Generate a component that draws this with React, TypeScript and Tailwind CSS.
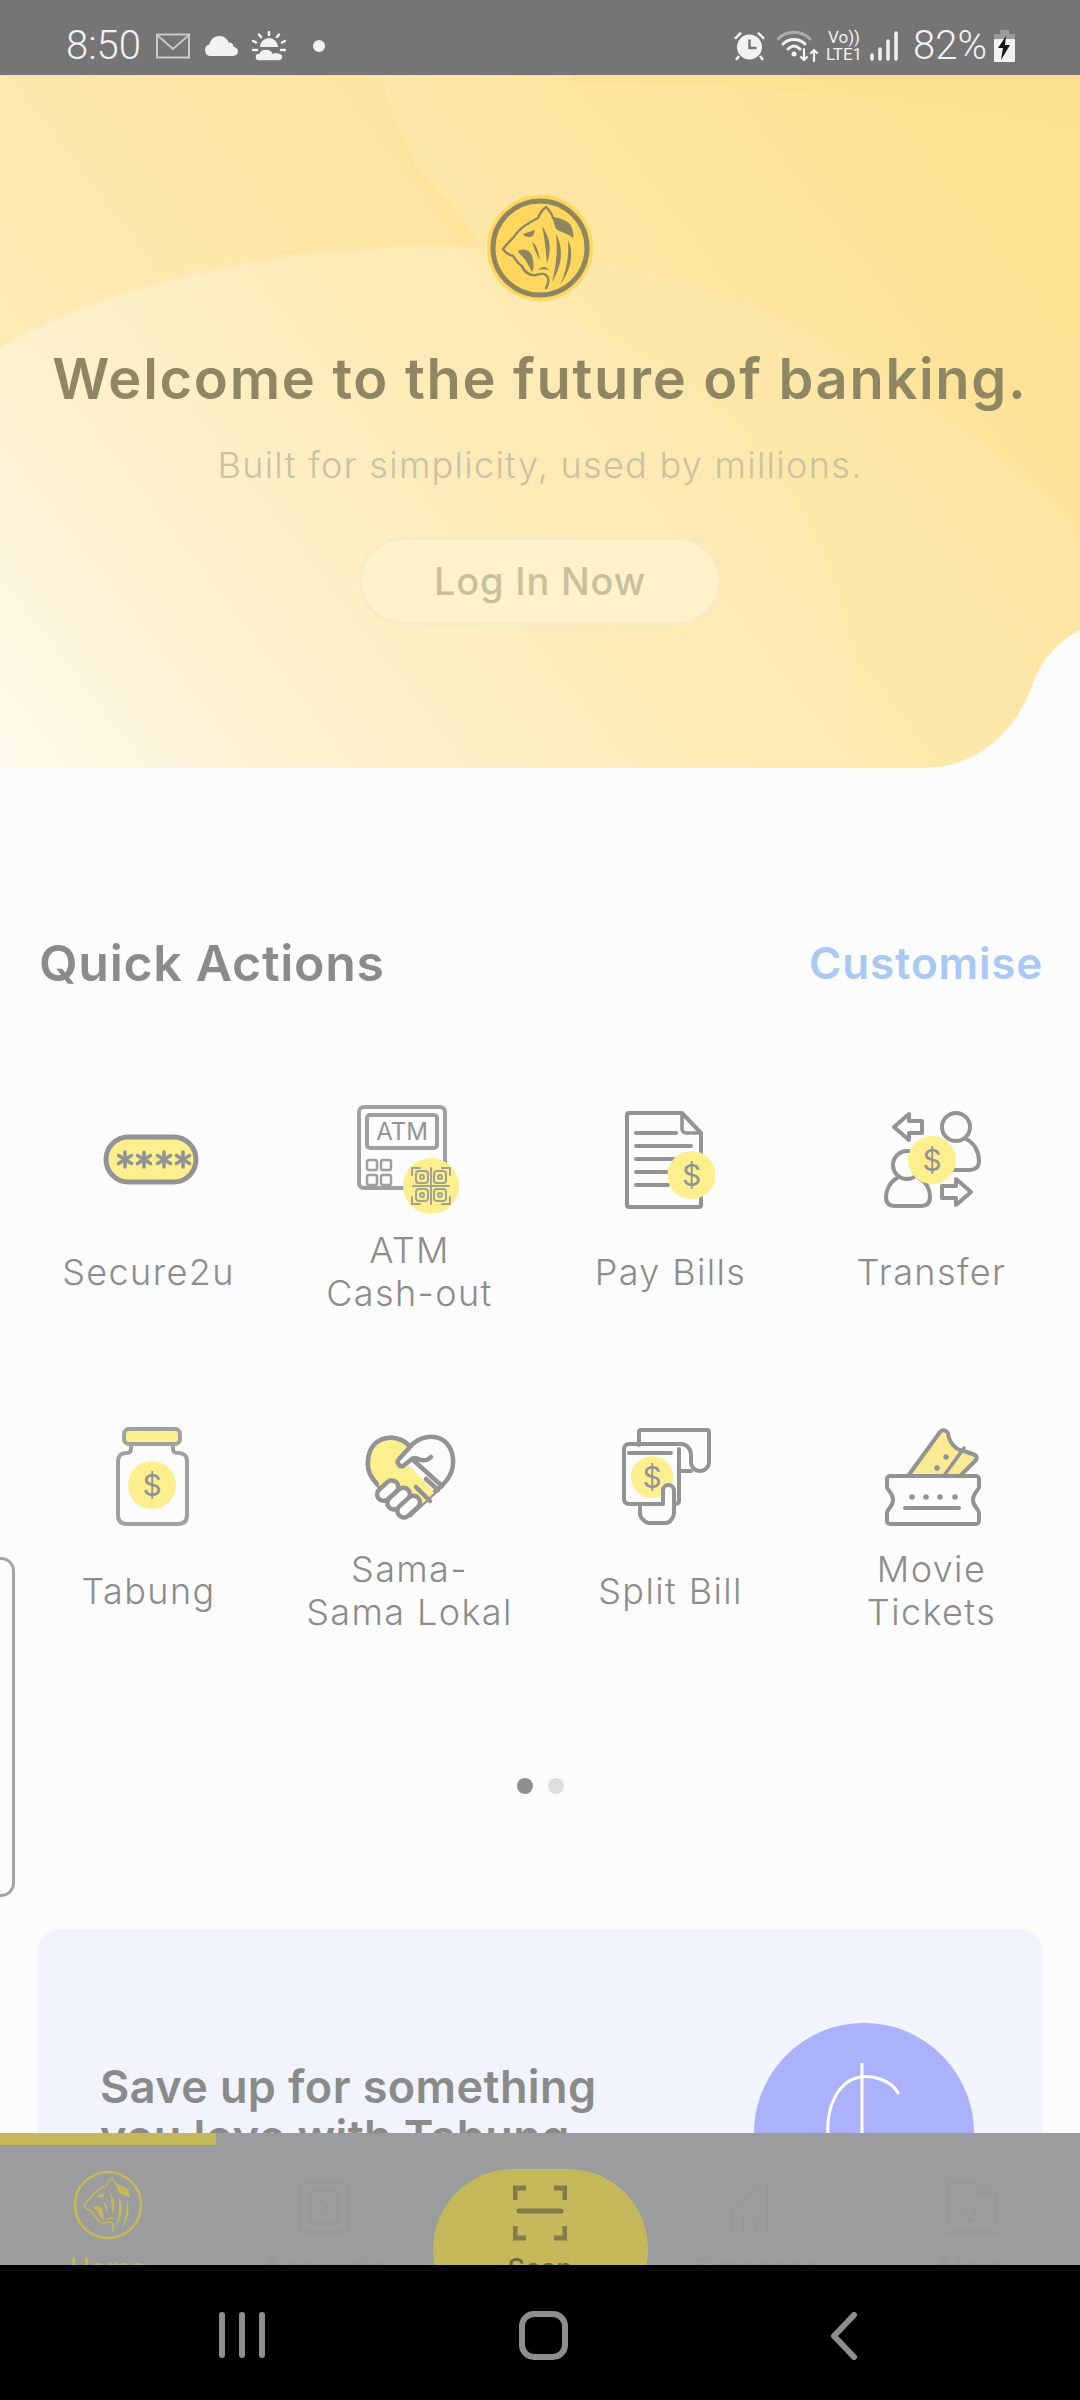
const sans = "font-['Inter','Liberation_Sans',sans-serif]";

const LINE = "#939393";
const YELLOW = "#fdee8e";

function Dollar({ x, y, size = 30 }: { x: number; y: number; size?: number }) {
  return (
    <text x={x} y={y + size * 0.36} textAnchor="middle" fontSize={size} fontFamily="Inter, sans-serif" fill={LINE} stroke="none">
      $
    </text>
  );
}

function Icon({ children }: { children: React.ReactNode }) {
  return (
    <svg width="120" height="120" viewBox="0 0 120 120" fill="none" stroke={LINE} strokeWidth="3.5" strokeLinecap="round" strokeLinejoin="round" className="overflow-visible">
      {children}
    </svg>
  );
}

function SecureIcon() {
  return (
    <Icon>
      <rect x="17" y="37" width="90" height="45" rx="22.5" fill={YELLOW} strokeWidth="5" />
      {[36, 55, 75, 94].map((x) => (
        <g key={x} strokeWidth="3.5">
          <path d={`M${x} 52v15`} />
          <path d={`M${x - 6.5} 55.5l13 8`} />
          <path d={`M${x + 6.5} 55.5l-13 8`} />
        </g>
      ))}
    </Icon>
  );
}

function AtmIcon() {
  return (
    <Icon>
      <rect x="9" y="7" width="86" height="81" rx="5" strokeWidth="4" stroke="#a0a0a0" />
      <rect x="17" y="15" width="70" height="33" rx="3" strokeWidth="4" stroke="#a0a0a0" />
      <text x="52" y="40" textAnchor="middle" fontSize="24" fontFamily="Inter, sans-serif" fill={LINE} stroke="none">
        ATM
      </text>
      {[17, 31].map((x) =>
        [60, 75].map((y) => <rect key={`${x}${y}`} x={x} y={y} width="10" height="10" rx="2" strokeWidth="2.5" stroke="#a0a0a0" />),
      )}
      <circle cx="81" cy="86" r="28" fill={YELLOW} stroke="none" />
      <g strokeWidth="2" stroke="#a3a394">
        <path d="M62 75v-7h8M92 68h8v7M100 97v7h-8M70 104h-8v-7" />
        <path d="M81 68v36M63 86h36" />
        {[72, 90].map((x) =>
          [77, 95].map((y) => (
            <g key={`${x}${y}`}>
              <rect x={x - 6} y={y - 6} width="12" height="12" rx="3" />
              <circle cx={x} cy={y} r="2" />
            </g>
          )),
        )}
      </g>
    </Icon>
  );
}

function BillIcon() {
  return (
    <Icon>
      <path d="M18 13h53l19 20v72a2 2 0 0 1-2 2H18a2 2 0 0 1-2-2V15a2 2 0 0 1 2-2z" strokeWidth="4" />
      <path d="M71 13v16a4 4 0 0 0 4 4h15" strokeWidth="3.5" />
      <path d="M25 33h40M25 46h55M25 59h40M25 72h32M25 85h32" strokeWidth="4" />
      <circle cx="80.5" cy="75" r="24" fill={YELLOW} stroke="none" />
      <Dollar x={80.5} y={75} />
    </Icon>
  );
}

function TransferIcon() {
  return (
    <Icon>
      <path d="M37 14L22 27l15 13v-7h13V21H37z" strokeWidth="4" />
      <path d="M84 105l15-13-15-13v7H70v12h14z" strokeWidth="4" />
      <circle cx="84" cy="27" r="14" strokeWidth="4" />
      <path d="M94 39c9 4 13 14 13 22 0 6-4 9-9 9H80" strokeWidth="4" />
      <circle cx="35" cy="65" r="14" strokeWidth="4" />
      <path d="M25 78c-7 4-11 12-11 19 0 6 3 9 9 9h26c6 0 9-3 9-9 0-8-4-15-11-19" strokeWidth="4" />
      <circle cx="60" cy="60" r="24" fill={YELLOW} stroke="none" />
      <Dollar x={60} y={60} />
    </Icon>
  );
}

function JarIcon() {
  return (
    <Icon>
      <rect x="35" y="10" width="56" height="15" rx="5" fill={YELLOW} strokeWidth="4" stroke="#a0a0a0" />
      <path d="M42 25v5c0 4-3 4-5 4-5 0-8 3-8 8v54c0 6 3 9 9 9h51c6 0 9-3 9-9V42c0-5-3-8-8-8-3 0-6 0-6-4v-5" strokeWidth="4" stroke="#a0a0a0" />
      <circle cx="63" cy="66" r="24" fill={YELLOW} stroke="none" />
      <Dollar x={63} y={66} />
    </Icon>
  );
}

function HandshakeIcon() {
  return (
    <Icon>
      <path d="M60 28C50 14 20 14 18 42c-1 12 6 20 14 28l28 26 28-26c10-8 16-18 15-30-2-26-30-28-43-12z" fill="#fcfcfc" strokeWidth="4.5" />
      <path d="M60 28C50 14 20 14 18 42c-1 12 6 20 14 28l28 26 24-22c-8-12-20-22-32-34z" fill={YELLOW} stroke="none" />
      <path d="M60 28C50 14 20 14 18 42c-1 10 3 16 9 23" strokeWidth="4.5" />
      <path d="M60 28L49 40c-3 3 0 8 4 7l9-7c3-2 6 0 9 1 4 1 8-1 10-3" fill="#fcfcfc" strokeWidth="4.5" />
      <path d="M62 40l30 27M76 60l12 11M66 68l14 14" strokeWidth="4.5" />
      <g fill="#fcfcfc" strokeWidth="4.5">
        <rect x="26" y="65" width="24" height="13" rx="6.5" transform="rotate(-42 38 72)" />
        <rect x="36" y="73" width="26" height="13" rx="6.5" transform="rotate(-42 49 80)" />
        <rect x="46" y="81" width="26" height="13" rx="6.5" transform="rotate(-42 59 88)" />
      </g>
    </Icon>
  );
}

function SplitIcon() {
  return (
    <Icon>
      <path d="M28 26V13a2 2 0 0 1 2-2h66a2 2 0 0 1 2 2v30a9 9 0 0 1-9 9 9 9 0 0 1-9-9V36c0-6-4-11-10-11H18c-3 0-5 2-5 5v50c0 3 2 5 5 5h42" strokeWidth="4" />
      <path d="M68 52h12M68 30v52c0 2-2 3-5 3" strokeWidth="4" />
      <path d="M18 34h42" strokeWidth="4" />
      <circle cx="41" cy="58" r="21" fill={YELLOW} stroke="none" />
      <Dollar x={41} y={58} />
      <path d="M52 85V72c0-8 11-8 11 0v22c0 4-4 10-8 10H38c-4 0-9-6-9-9V85h23z" fill="#fcfcfc" strokeWidth="4" />
    </Icon>
  );
}

function TicketIcon() {
  return (
    <Icon>
      <path d="M36 57L68 13c2-3 6-2 8 1 1 9 7 17 16 18l11 4c2 1 2 3 1 5L88 57z" fill="#fbeb94" strokeWidth="4" />
      <path d="M71 58l21-29" strokeWidth="3.5" />
      <circle cx="74" cy="38" r="2" fill={LINE} strokeWidth="1.5" />
      <circle cx="65" cy="49" r="2" fill={LINE} strokeWidth="1.5" />
      <path d="M18 57h86a3 3 0 0 1 3 3v8c0 3-6 6-6 13s6 9 6 13v8a3 3 0 0 1-3 3H18a3 3 0 0 1-3-3v-8c0-4 6-6 6-13s-6-10-6-13v-8a3 3 0 0 1 3-3z" fill="#fcfcfc" strokeWidth="4" />
      {[40, 54, 68, 83].map((x) => (
        <circle key={x} cx={x} cy="78" r="2" fill={LINE} strokeWidth="1.5" />
      ))}
      <path d="M33 89h54" strokeWidth="4" />
    </Icon>
  );
}

// tiger head, drawn around a 0,0 centre
function TigerMark({ color }: { color: string }) {
  return (
    <g>
      <g fill="none" stroke={color} strokeWidth="2.4" strokeLinecap="round" strokeLinejoin="round">
        <path d="M-37 1C-32-6-27-9-24-14C-19-21-10-26-2-30C0-35 3-39 6-41C9-38 12-34 13-30" />
        <path d="M-37 1C-35 5-30 7-27 8C-24 12-22 16-18 18C-16 24-10 28-4 27C2 25 6 25 8 30C9 34 8 37 6 40" />
      </g>
      <g fill={color}>
        <path d="M13-31C20-30 27-27 30-24C33-18 34-14 33-10C27-15 20-16 16-19C14-23 13-27 13-31z" />
        <path d="M-17-14L-5-18L-7-12C-11-10-15-11-17-14z" />
        <path d="M-22 3C-16 0-10 2-8 8C-6 14-6 20-8 24C-11 18-14 12-18 8C-20 6-22 5-22 3z" />
        <path d="M-8-6C-4-4-2 2 0 12C-4 6-6 0-8-6z" />
        <path d="M2-22C10-10 12 0 7 16C6 4 5-8 2-22z" />
        <path d="M16-14C24 0 22 18 12 34C16 18 18 4 16-14z" />
        <path d="M28-8C34 4 32 20 20 37C27 22 29 8 28-8z" />
        <path d="M-2 22C2 18 6 18 9 22C6 21 2 21-2 22z" />
      </g>
    </g>
  );
}

function CoinLogo() {
  return (
    <svg width="106" height="106" viewBox="-53 -53 106 106">
      <circle r="53" fill="#fed75c" />
      <circle r="47" fill="none" stroke="#8e8660" strokeWidth="5" />
      <TigerMark color="#8e8660" />
    </svg>
  );
}

function StatusBar() {
  return (
    <div className="flex h-[75px] shrink-0 items-center justify-between bg-[#757575] pt-[17px] pr-[65px] pl-[66px] font-['Roboto',sans-serif] text-[#f2f2f2]">
      <div className="flex items-center">
        <span className="text-[40px] leading-none font-light">8:50</span>
        <svg width="34" height="26" viewBox="0 0 34 26" fill="none" stroke="#c9c9c9" strokeWidth="2" className="ml-[15px]">
          <rect x="1" y="1.5" width="32" height="23" />
          <path d="M1 2l16 14L33 2" />
        </svg>
        <svg width="34" height="20" viewBox="0 0 34 20" fill="#f2f2f2" className="ml-[14px]">
          <path d="M7 20a6 6 0 0 1-1.500-11.800C6.500 3.500 10.500 0 15.500 0c4.500 0 8 2.800 9.300 6.800 1.200-.4 2.200-.2 3.200.6 1 1 1.300 2 1.200 3.200 2.800.8 4.800 2.500 4.800 5 0 2.600-2 4.400-5 4.400z" />
        </svg>
        <svg width="34" height="30" viewBox="0 0 34 30" fill="#f2f2f2" stroke="#f2f2f2" className="ml-[14px]">
          <path d="M8 16a9 9 0 0 1 18 0z" stroke="none" />
          <path strokeWidth="2.500" strokeLinecap="round" d="M17 1v3M7 3.500l2 2.500M27 3.500l-2 2.500M1 10l3 1.500M33 10l-3 1.500M1 19h4M29 19h4" />
          <path d="M7 30a4 4 0 0 1 0-8c1-3 4-4 7-4 3 0 6 2 7 4 2-1 4-1 6 0 3 .5 4 2 4 4s-2 4-4 4z" stroke="#757575" strokeWidth="1.500" />
        </svg>
        <span className="ml-[27px] h-[12px] w-[12px] rounded-full bg-[#f2f2f2]" />
      </div>
      <div className="flex items-center">
        <svg width="33" height="32" viewBox="0 0 33 32" fill="#f2f2f2">
          <path d="M1 8l6-6 2 1.500-6 6zM32 8l-6-6-2 1.500 6 6z" />
          <circle cx="16.500" cy="17" r="12.500" />
          <path d="M16.500 9.500V18h7" fill="none" stroke="#757575" strokeWidth="2.500" />
          <path d="M6 26l-3 4M27 26l3 4" stroke="#f2f2f2" strokeWidth="2.500" />
        </svg>
        <svg width="42" height="32" viewBox="0 0 42 32" fill="none" className="ml-[11px]" strokeLinecap="round">
          <path d="M1 9c9-9 23-9 32 0" stroke="#acacac" strokeWidth="3" />
          <path d="M6 14c6-6 16-6 22 0M11 19c4-4 8-4 12 0" stroke="#f2f2f2" strokeWidth="3" />
          <circle cx="17" cy="24" r="2.500" fill="#f2f2f2" />
          <path d="M27 19v11M24 27l3 3 3-3M37 31V20M34 23l3-3 3 3" stroke="#f2f2f2" strokeWidth="2.200" />
        </svg>
        <div className="ml-[5px] flex w-[40px] flex-col items-center text-[17px] leading-[17px] font-normal">
          <span>Vo))</span>
          <span>LTE1</span>
        </div>
        <svg width="28" height="30" viewBox="0 0 28 30" stroke="#f2f2f2" strokeWidth="3.500" strokeLinecap="round" className="ml-[6px]">
          <path d="M2 24v4M10 18v10M18 10v18" />
          <path d="M26 2v26" />
        </svg>
        <span className="ml-[15px] text-[40px] leading-none font-light">82%</span>
        <svg width="21" height="32" viewBox="0 0 21 32" className="ml-[7px]">
          <path d="M6 0h9v4h6v5H0V4h6z" fill="#9a9a9a" />
          <rect y="9" width="21" height="23" rx="1" fill="#f2f2f2" />
          <path d="M12 6L4 18h5l-2 12 9-15h-5z" fill="#161616" />
        </svg>
      </div>
    </div>
  );
}

function HeroBackdrop() {
  return (
    <svg viewBox="0 75 1080 693" preserveAspectRatio="none" className="absolute inset-0 h-full w-full">
      <defs>
        <linearGradient id="hero" gradientUnits="userSpaceOnUse" x1="900" y1="100" x2="0" y2="790">
          <stop offset="0" stopColor="#fde294" />
          <stop offset="0.5" stopColor="#fde9ae" />
          <stop offset="0.78" stopColor="#fdf1ca" />
          <stop offset="1" stopColor="#fefaec" />
        </linearGradient>
      </defs>
      <rect x="0" y="75" width="1080" height="693" fill="url(#hero)" />
      <path d="M0 75H379C395 130 420 180 448 200L482 247C300 240 120 280 0 347z" fill="#fddd88" opacity="0.35" />
      <path d="M379 75C400 160 440 260 572 320C730 390 860 510 861 768H0V75z" fill="#fff" opacity="0.06" />
      <path d="M0 347C100 280 250 247 413 247C560 247 690 275 785 320C920 390 1020 460 1080 533V768H0z" fill="#fff" opacity="0.08" />
      <path d="M572 83C700 80 900 90 1080 133V75H572z" fill="#fddc85" opacity="0.35" />
      <path d="M1080 630C1052 645 1040 665 1033 683C1015 735 975 768 923 768H1080z" fill="#fcfcfc" />
    </svg>
  );
}

function Hero() {
  return (
    <section className="relative flex h-[693px] flex-col items-center pt-[120px]">
      <HeroBackdrop />
      <div className="relative flex flex-col items-center">
        <CoinLogo />
        <h1 className={`${sans} mt-[47px] text-[56px] leading-[62px] font-semibold tracking-[1.7px] whitespace-nowrap text-[#8f8663]`}>
          Welcome to the future of banking.
        </h1>
        <p className={`${sans} mt-[35px] text-[36px] leading-[40px] font-light tracking-[1.3px] text-[#c9c2a4]`}>
          Built for simplicity, used by millions.
        </p>
        <div className={`${sans} mt-[52px] flex h-[88px] w-[362px] items-center justify-center rounded-full border-[3px] border-[#f6ebc6] bg-[#fdf2c9] text-[38px] font-medium tracking-[0.8px] text-[#c8c09c]`}>
          Log In Now
        </div>
      </div>
    </section>
  );
}

const actions = [
  { label: ["Secure2u"], icon: <SecureIcon /> },
  { label: ["ATM", "Cash-out"], icon: <AtmIcon /> },
  { label: ["Pay Bills"], icon: <BillIcon /> },
  { label: ["Transfer"], icon: <TransferIcon /> },
  { label: ["Tabung"], icon: <JarIcon /> },
  { label: ["Sama-", "Sama Lokal"], icon: <HandshakeIcon /> },
  { label: ["Split Bill"], icon: <SplitIcon /> },
  { label: ["Movie", "Tickets"], icon: <TicketIcon /> },
];

function QuickActions() {
  return (
    <section className={`${sans} relative`}>
      <div className="mt-[165px] flex h-[60px] items-center justify-between pr-[37px] pl-[39px]">
        <h2 className="text-[50px] font-semibold tracking-[0.7px] text-[#8b8b8b]">Quick Actions</h2>
        <span className="text-[44px] font-semibold tracking-[0.8px] text-[#a9c9f4]">Customise</span>
      </div>
      <div className="mt-[107px] grid grid-cols-4 gap-y-[104px] px-[18px]">
        {actions.map((a) => (
          <div key={a.label[0]} className="flex flex-col items-center">
            <div className="h-[120px] w-[120px] shrink-0">{a.icon}</div>
            <div className="mt-[9px] flex h-[86px] flex-col items-center justify-center text-[36px] leading-[43px] font-light tracking-[1.4px] whitespace-nowrap text-[#8c8c8c]">
              {a.label.map((l) => (
                <span key={l}>{l}</span>
              ))}
            </div>
          </div>
        ))}
      </div>
      <div className="mt-[144px] flex justify-center gap-[15px]">
        <span className="h-[16px] w-[16px] rounded-full bg-[#8f8f8f]" />
        <span className="h-[16px] w-[16px] rounded-full bg-[#dedede]" />
      </div>
    </section>
  );
}

function PromoCard() {
  return (
    <div className="mx-[37px] mt-[135px] flex h-[400px] justify-between rounded-[24px] bg-[#f1f4fe] pt-[94px] pr-[69px] pl-[63px]">
      <p className={`${sans} pt-[39px] text-[45px] leading-[50px] font-semibold tracking-[0.4px] whitespace-nowrap text-[#8a8b88]`}>
        Save up for something
        <br />
        you love with Tabung
      </p>
      <div className="flex h-[220px] w-[220px] shrink-0 items-center justify-center rounded-full bg-[#abb1fb]">
        <svg width="80" height="140" viewBox="0 0 80 140" fill="none" stroke="#fff" strokeWidth="3" strokeLinecap="round">
          <path d="M38 0v140" />
          <path d="M74 30C68 18 50 12 36 14C14 18 2 44 4 72C6 100 24 118 50 118" />
        </svg>
      </div>
    </div>
  );
}

function ScanIcon() {
  return (
    <svg width="54" height="56" viewBox="0 0 54 56" fill="none" stroke="#827c48" strokeWidth="5">
      <path d="M2 15V3h11M41 3h11v12M2 41v12h11M41 53h11V41" />
      <path d="M6 26h42" strokeLinecap="round" strokeWidth="5" />
    </svg>
  );
}

function TabBar() {
  return (
    <nav className={`${sans} relative grid h-[132px] shrink-0 grid-cols-5 overflow-hidden bg-[#9b9c9d]`}>
      <span className="absolute top-0 left-0 h-[12px] w-[216px] bg-[#c4b85a]" />
      <div className="flex flex-col items-center pt-[37px]">
        <svg width="70" height="70" viewBox="-53 -53 106 106">
          <circle r="50" fill="none" stroke="#c4b85a" strokeWidth="4" />
          <TigerMark color="#c4b85a" />
        </svg>
        <span className="mt-[15px] text-[27px] leading-none font-medium text-[#c4b85a]">Home</span>
      </div>
      <div className="flex flex-col items-center pt-[47px]">
        <svg width="52" height="54" viewBox="0 0 52 54" fill="none" stroke="#97989a" strokeWidth="2">
          <rect x="2" y="2" width="48" height="50" rx="4" />
          <rect x="12" y="10" width="28" height="34" rx="3" />
          <path d="M22 20l8 7-8 7z" />
        </svg>
        <span className="mt-[21px] text-[27px] leading-none text-[#97989a]">Accounts</span>
      </div>
      <div className="relative">
        <div className="mx-auto mt-[36px] flex h-[160px] w-[215px] flex-col items-center rounded-[80px] bg-[#c4b85a] pt-[16px]">
          <ScanIcon />
          <span className="mt-[14px] text-[27px] leading-none font-medium text-[#6f6a3f]">Scan</span>
        </div>
      </div>
      <div className="flex flex-col items-center pt-[47px]">
        <svg width="54" height="54" viewBox="0 0 54 54" fill="none" stroke="#97989a" strokeWidth="2">
          <path d="M2 52V30L30 8M14 52V34M26 52V38M38 52V4" />
        </svg>
        <span className="mt-[21px] text-[27px] leading-none text-[#97989a]">Expenses</span>
      </div>
      <div className="flex flex-col items-center pt-[47px]">
        <svg width="52" height="54" viewBox="0 0 52 54" fill="none" stroke="#97989a" strokeWidth="2">
          <path d="M2 2h28v12h20v38H2zM30 2l20 12M16 32l8 8 8-14" />
        </svg>
        <span className="mt-[21px] text-[27px] leading-none text-[#97989a]">More</span>
      </div>
    </nav>
  );
}

function SystemNav() {
  return (
    <div className="flex h-[135px] shrink-0 items-start bg-black pt-[47px] pl-[219px]">
      <div className="flex h-[46px] gap-[14px]">
        <span className="h-full w-[6px] rounded-full bg-[#8e8e8e]" />
        <span className="h-full w-[6px] rounded-full bg-[#8e8e8e]" />
        <span className="h-full w-[6px] rounded-full bg-[#8e8e8e]" />
      </div>
      <span className="mt-[-1px] ml-[254px] h-[49px] w-[49px] rounded-[15px] border-[6px] border-[#8e8e8e]" />
      <svg width="28" height="48" viewBox="0 0 28 48" fill="none" stroke="#8e8e8e" strokeWidth="6" strokeLinecap="round" strokeLinejoin="round" className="ml-[262px]">
        <path d="M24 3L4 24l20 21" />
      </svg>
    </div>
  );
}

export default function App() {
  return (
    <div className="flex h-[2400px] w-[1080px] flex-col overflow-hidden bg-[#fcfcfc]">
      <StatusBar />
      <main className="relative min-h-0 flex-1 overflow-hidden">
        <Hero />
        <QuickActions />
        <PromoCard />
        {/* side tab peeking in from the left edge */}
        <span className="absolute top-[1482px] left-[-20px] h-[340px] w-[35px] rounded-[14px] border-[3px] border-[#a6a6a6]" />
      </main>
      <TabBar />
      <SystemNav />
    </div>
  );
}
